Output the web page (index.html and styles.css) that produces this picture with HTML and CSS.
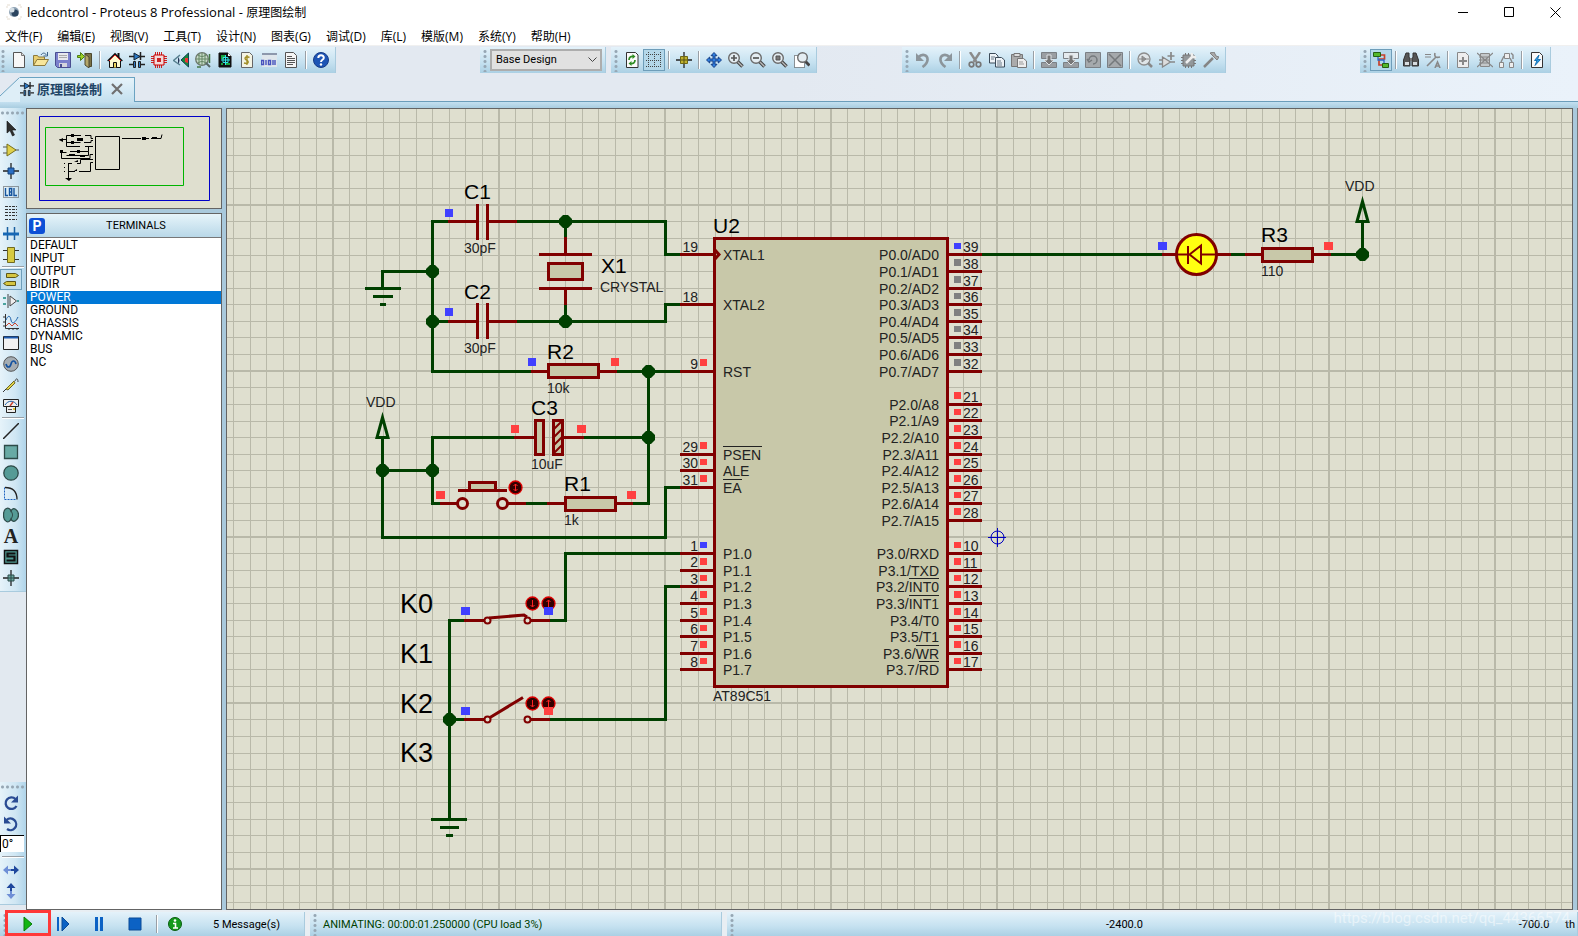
FILE: index.html
```html
<!DOCTYPE html>
<html lang="zh-CN">
<head>
<meta charset="utf-8">
<title>ledcontrol - Proteus 8 Professional - 原理图绘制</title>
<link rel="stylesheet" href="styles.css">
</head>
<body>
<header class="titlebar">
  <svg class="app-icon" viewBox="0 0 16 16"><path d="M1 1h3M12 1h3M1 15h3M12 15h3M1 2v2M15 2v2M1 12v2M15 12v2" stroke="#e4dcd0"/><circle cx="8" cy="8" r="5" fill="#8fa3b5"/><circle cx="9" cy="9" r="3.500" fill="#2c4560"/><circle cx="6" cy="6" r="2.500" fill="#d5dfe6"/></svg>
  <h1 class="title">ledcontrol - Proteus 8 Professional - <span class="doc">原理图绘制</span></h1>
  <div class="win-buttons">
    <button class="win" aria-label="最小化"><svg viewBox="0 0 11 11"><path d="M0 5.500h10"/></svg></button>
    <button class="win" aria-label="最大化"><svg viewBox="0 0 11 11"><path d="M.5.5h9v9h-9z"/></svg></button>
    <button class="win" aria-label="关闭"><svg viewBox="0 0 11 11"><path d="M.5.5l10 10M10.500.5l-10 10"/></svg></button>
  </div>
</header>
<nav class="menubar">
  <button>文件(F)</button><button>编辑(E)</button><button>视图(V)</button><button>工具(T)</button><button>设计(N)</button><button>图表(G)</button><button>调试(D)</button><button>库(L)</button><button>模版(M)</button><button>系统(Y)</button><button>帮助(H)</button>
</nav>
<div class="rebar">
  <div class="toolbar tb-file">
    <span class="grip"></span>
    <button class="tool" aria-label="新建"><svg viewBox="0 0 16 16"><path d="M2.500.5h8l3 3v12h-11z" fill="#f7f7f7" stroke="#555"/><path d="M10.500.5v3h3" fill="#ddd" stroke="#777"/></svg></button>
    <button class="tool" aria-label="打开"><svg viewBox="0 0 16 16"><path d="M.5 13.500v-10h4l1 1.500h6v3" fill="#e9cf70" stroke="#8c7a3c"/><path d="M.5 13.500L4 7.500h11.500l-3.500 6z" fill="#f8e69a" stroke="#8c7a3c"/><path d="M8 3c2-3 4-2 5.500 0M14.500 0v4h-4" fill="none" stroke="#3d6288"/></svg></button>
    <button class="tool" aria-label="保存"><svg viewBox="0 0 16 16"><path d="M.5.5h15v15h-13l-2-2z" fill="#7b80cc" stroke="#4a4e90"/><path d="M3 1h10v7H3z" fill="#e8e8ee"/><path d="M4 11h8v4H4z" fill="#d5d5dd"/><path d="M5 12h2v3H5z" fill="#4a4e90"/><path d="M4 3.500h8M4 5.500h8" stroke="#aaa"/></svg></button>
    <button class="tool" aria-label="退出"><svg viewBox="0 0 16 16"><path d="M7.500 1.500h7v13h-3" fill="#7b7348" stroke="#4d4930"/><path d="M8 2l4 3v11l-4-3z" fill="#b3a669" stroke="#4d4930"/><path d="M.5 3.500h3v-3l4 4-4 4v-3h-3z" fill="#9bd326" stroke="#4c7d14"/></svg></button>
    <span class="sep"></span>
    <button class="tool" aria-label="主页"><svg viewBox="0 0 16 16"><path d="M2.500 8.500v7h11v-7L8 3z" fill="#fffbd0" stroke="#111"/><path d="M11.500 1v4" stroke="#111" stroke-width="2"/><path d="M.7 9L8 1.700 15.300 9" fill="none" stroke="#111" stroke-width="1.500"/><path d="M2 9L8 3l6 6" fill="none" stroke="#d22"/><path d="M6.500 15.500v-5h3v5" fill="#f0d860" stroke="#111"/></svg></button>
    <button class="tool" aria-label="原理图"><svg viewBox="0 0 16 16"><path d="M0 4.500h16M0 12.500h4M12 12.500h4" stroke="#222" stroke-width="1.500"/><path d="M5 1l6 3.500L5 8z" fill="#2b78c4" stroke="#123"/><path d="M11.500 0v8" stroke="#222" stroke-width="1.500"/><path d="M4.500 9.500h2v6h-2zM9.500 9.500h2v6h-2z" fill="#2b78c4" stroke="#222"/></svg></button>
    <button class="tool" aria-label="PCB"><svg viewBox="0 0 16 16"><path d="M4.500 0v16M6.500 0v16M8.500 0v16M10.500 0v16M0 4.500h16M0 6.500h16M0 8.500h16M0 10.500h16" stroke="#c22"/><path d="M3 3h10v10H3z" fill="#f3dada" stroke="#c00"/><path d="M6 6h4v4H6z" fill="#c22"/></svg></button>
    <button class="tool" aria-label="3D"><svg viewBox="0 0 16 16"><path d="M15.500 1v14L8 8z" fill="#188a3c" stroke="#145"/><path d="M12 6h3v5l-3-1z" fill="#e33"/><path d="M7 3L.5 8.500 7 13" fill="none" stroke="#57808f" stroke-width="1.500"/><path d="M5 5c2 2 2 5 0 7z" fill="#235"/></svg></button>
    <button class="tool" aria-label="Gerber"><svg viewBox="0 0 16 16"><circle cx="7" cy="7" r="6.300" fill="#c9dcc9" stroke="#6b776b" stroke-width="1.300"/><path d="M1 7h12M7 1v12M3 3c3 2 5 2 8 0M3 11c3-2 5-2 8 0M4 2v10M10 2v10" fill="none" stroke="#658765"/><path d="M11 11l4 4" stroke="#566" stroke-width="2"/><path d="M14.500 2v9M2 15h4" stroke="#474" stroke-width="1.500"/></svg></button>
    <button class="tool" aria-label="设计浏览器"><svg viewBox="0 0 16 16"><path d="M2 1h9l3 3v11H2z" fill="#111" stroke="#111"/><path d="M4 4h4M4 6h3M9 12h4M4 12h2" stroke="#1fd34c" stroke-width="1.500"/><path d="M6 5.500h5v5H6zM8.500 3v10M4 8h9" fill="none" stroke="#31e5e5"/><path d="M11 1v3h3" fill="#fff"/></svg></button>
    <button class="tool" aria-label="材料清单"><svg viewBox="0 0 16 16"><path d="M2.500.5h8l3 3v12h-11z" fill="#f4f4e4" stroke="#666"/><path d="M10.500 5.500c-4-2-6 1-3 2.500s2 4.500-2.500 3M8 3v10" fill="none" stroke="#a28f28" stroke-width="1.400"/></svg></button>
    <button class="tool" aria-label="源代码"><svg viewBox="0 0 16 16"><path d="M1 1h15v14H1z" fill="#dfe6ec"/><path d="M1 2h15" stroke="#8d98ac" stroke-width="2"/><path d="M.5 8.500h2v4h-2zM5 8v5M7.500 8.500h2v4h-2zM12 8v5M14 8v5" fill="none" stroke="#4652bd" stroke-width="1.400"/></svg></button>
    <button class="tool" aria-label="项目说明"><svg viewBox="0 0 16 16"><path d="M2.500.5h8l3 3v12h-11z" fill="#f5f5f5" stroke="#555"/><path d="M4 4.500h5M4 6.500h8M4 8.500h8M4 10.500h8M4 12.500h6" stroke="#555"/></svg></button>
    <span class="sep"></span>
    <button class="tool" aria-label="帮助"><svg viewBox="0 0 16 16"><circle cx="8" cy="8" r="7.500" fill="#1d55b5" stroke="#173b85"/><path d="M5.300 6c0-3.500 5.500-3.500 5.500-.3C10.800 8 8 7.600 8 10" fill="none" stroke="#fff" stroke-width="2"/><circle cx="8" cy="12.500" r="1.200" fill="#fff"/></svg></button>
  </div>
  <div class="toolbar tb-design">
    <span class="grip"></span>
    <select class="design" aria-label="设计变体"><option>Base Design</option></select>
  </div>
  <div class="toolbar tb-view">
    <span class="grip"></span>
    <button class="tool" aria-label="刷新"><svg viewBox="0 0 16 16"><path d="M2.500.5h9l2.500 2.500v12.500H2.500z" fill="#fafafa" stroke="#333"/><path d="M5 8c0-3 2-4 4.500-3.500M11 8c0 3-2 4-4.500 3.500" fill="none" stroke="#2f8c22" stroke-width="1.700"/><path d="M8.500 2l3 2.500-3 2.500zM7.500 9l-3 2.500 3 2.500z" fill="#2f8c22"/></svg></button>
    <button class="tool on" aria-label="网格"><svg viewBox="0 0 16 16"><path d="M0 2.500h16M0 8.500h16M0 14.500h16M2.500 0v16M8.500 0v16M14.500 0v16" stroke="#444" stroke-dasharray="1 1"/></svg></button>
    <span class="sep"></span>
    <button class="tool" aria-label="原点"><svg viewBox="0 0 16 16"><path d="M0 8h16M8 0v16" stroke="#222" stroke-width="1.300"/><path d="M4.500 4.500h7v7h-7z" fill="#c0b22d" stroke="#6d6616"/><path d="M5 8h6M8 5v6" stroke="#554f10"/></svg></button>
    <span class="sep"></span>
    <button class="tool" aria-label="平移"><svg viewBox="0 0 16 16"><path d="M8 .5l3 3.200H9v3.300h3.300V5l3.200 3-3.200 3V9H9v3.300h2L8 15.500l-3-3.200h2V9H3.700v2L.5 8l3.200-3v2H7V3.700H5z" fill="#2f7fe0" stroke="#163f86"/></svg></button>
    <button class="tool" aria-label="放大"><svg viewBox="0 0 16 16"><path d="M9.500 9.500l5 5" stroke="#444" stroke-width="3.500"/><path d="M10 10l4.500 4.500" stroke="#bbb" stroke-width="1.300"/><circle cx="6" cy="6" r="5.300" fill="#e4edf2" stroke="#6b6b6b" stroke-width="1.400"/><path d="M3 6h6M6 3v6" stroke="#555" stroke-width="1.700"/></svg></button>
    <button class="tool" aria-label="缩小"><svg viewBox="0 0 16 16"><path d="M9.500 9.500l5 5" stroke="#444" stroke-width="3.500"/><path d="M10 10l4.500 4.500" stroke="#bbb" stroke-width="1.300"/><circle cx="6" cy="6" r="5.300" fill="#e4edf2" stroke="#6b6b6b" stroke-width="1.400"/><path d="M3 6h6" stroke="#555" stroke-width="1.700"/></svg></button>
    <button class="tool" aria-label="显示全部"><svg viewBox="0 0 16 16"><path d="M9.500 9.500l5 5" stroke="#444" stroke-width="3.500"/><path d="M10 10l4.500 4.500" stroke="#bbb" stroke-width="1.300"/><circle cx="6" cy="6" r="5.300" fill="#e4edf2" stroke="#6b6b6b" stroke-width="1.400"/><path d="M4 4h4v4H4z" fill="#777" stroke="#555"/></svg></button>
    <button class="tool" aria-label="区域缩放"><svg viewBox="0 0 16 16"><path d="M.5 3.500h10v12H.5z" fill="#fff" stroke="#333" stroke-dasharray="1 1"/><path d="M11.500 9.500l4 4" stroke="#444" stroke-width="3"/><circle cx="8.500" cy="5.500" r="4.800" fill="#e4edf2" stroke="#6b6b6b" stroke-width="1.400"/></svg></button>
  </div>
  <div class="toolbar tb-edit">
    <span class="grip"></span>
    <button class="tool" aria-label="撤销"><svg viewBox="0 0 16 16"><path d="M3 5.500c5-5 10-2 9.500 2.500-.3 3-2 5-5 7" fill="none" stroke="#8c959b" stroke-width="2.600"/><path d="M1 1v8h8z" fill="#8c959b"/></svg></button>
    <button class="tool" aria-label="重做"><svg viewBox="0 0 16 16"><path d="M13 5.500c-5-5-10-2-9.500 2.500.3 3 2 5 5 7" fill="none" stroke="#8c959b" stroke-width="2.600"/><path d="M15 1v8H7z" fill="#8c959b"/></svg></button>
    <span class="sep"></span>
    <button class="tool" aria-label="剪切"><svg viewBox="0 0 16 16"><path d="M3 0l6.500 10M13 0L6.500 10" stroke="#8b8b8b" stroke-width="2.400"/><circle cx="4.500" cy="12.500" r="2.300" fill="none" stroke="#777" stroke-width="1.700"/><circle cx="11.500" cy="12.500" r="2.300" fill="none" stroke="#777" stroke-width="1.700"/></svg></button>
    <button class="tool" aria-label="复制"><svg viewBox="0 0 16 16"><path d="M.5 1.500h6l2.500 2.500v7H.5z" fill="#eef3f7" stroke="#3b4a58"/><path d="M6.500 5.500h6l3 2.500v7h-9z" fill="#eef3f7" stroke="#3b4a58"/><path d="M2 5h4M2 7h3M8 9h4M8 11h5M8 13h5" stroke="#6a7a88"/></svg></button>
    <button class="tool" aria-label="粘贴"><svg viewBox="0 0 16 16"><path d="M.5 2.500h11v12H.5z" fill="#ababab" stroke="#777"/><path d="M3 1.500h6v3H3z" fill="#ddd" stroke="#777"/><path d="M6.500 6.500h6l3 2.500v6.500h-9z" fill="#eee" stroke="#777"/><path d="M8 10h4M8 12h5" stroke="#999"/></svg></button>
    <span class="sep"></span>
    <button class="tool" aria-label="块复制"><svg viewBox="0 0 16 16"><path d="M.5.500h15v6H.5zM.5 10.500h15v5H.5z" fill="#9a9ea2" stroke="#7b8085"/><path d="M6 3h4v5h3l-5 5-5-5h3z" stroke="#dfe3e6" fill="#777"/></svg></button>
    <button class="tool" aria-label="块移动"><svg viewBox="0 0 16 16"><path d="M.5.500h15v6H.5z" fill="#e5ebef" stroke="#7b8085"/><path d="M.5 10.500h15v5H.5z" fill="#9a9ea2" stroke="#7b8085"/><path d="M6 3h4v5h3l-5 5-5-5h3z" stroke="#dfe3e6" fill="#777"/></svg></button>
    <button class="tool" aria-label="块旋转"><svg viewBox="0 0 16 16"><path d="M.5.5h15v15H.5z" fill="#a5a9ac" stroke="#7b8085"/><path d="M4 8a4 4 0 1 1 4 4M2 7l2 3 3-2" fill="none" stroke="#75797c" stroke-width="1.500"/></svg></button>
    <button class="tool" aria-label="块删除"><svg viewBox="0 0 16 16"><path d="M.5.5h15v15H.5z" fill="#a5a9ac" stroke="#7b8085"/><path d="M2 2l12 12M14 2L2 14" stroke="#75797c" stroke-width="1.500"/></svg></button>
    <span class="sep"></span>
    <button class="tool" aria-label="选取器件"><svg viewBox="0 0 16 16"><circle cx="7" cy="7" r="6" fill="#dfe5e8" stroke="#8c8c8c" stroke-width="1.300"/><path d="M2 7h10M5 4v6l4-3z" fill="#999" stroke="#888"/><path d="M11 11l4 4" stroke="#888" stroke-width="2.500"/></svg></button>
    <button class="tool" aria-label="制作器件"><svg viewBox="0 0 16 16"><path d="M3.500 5l8 5-8 5zM0 8h3M0 12h3M11 10h5" fill="#ddd" stroke="#888" stroke-width="1.300"/><path d="M12 0v8M8.500 4h7" stroke="#888" stroke-width="1.700"/></svg></button>
    <button class="tool" aria-label="封装工具"><svg viewBox="0 0 16 16"><path d="M4.500 1v15M7.500 1v15M10.500 1v15M0 5.500h15M0 8.500h15M0 11.500h15" stroke="#777"/><path d="M2 3h11v11H2z" fill="#92979a" stroke="#747474"/><path d="M5 11l7-7M11 1c-1 3 1 5 4 4" fill="none" stroke="#eee" stroke-width="2.500"/></svg></button>
    <button class="tool" aria-label="分解"><svg viewBox="0 0 16 16"><path d="M1 15l9-9" stroke="#858585" stroke-width="2.500"/><path d="M7 1l7 7 2-3-3-1-2-4z" fill="#aaa" stroke="#808080"/></svg></button>
  </div>
  <div class="toolbar tb-tools">
    <span class="grip"></span>
    <button class="tool on" aria-label="自动连线"><svg viewBox="0 0 16 16"><path d="M8 3h3.500v4H6v6h3" fill="none" stroke="#c6422b" stroke-width="1.700"/><path d="M5 5v3h6v3" fill="none" stroke="#2b66c6" stroke-width="1.300"/><path d="M.5.5h7v4h-7zM9.500 11.500h6v4h-6z" fill="#54b82c" stroke="#245f12"/></svg></button>
    <span class="sep"></span>
    <button class="tool" aria-label="搜索"><svg viewBox="0 0 16 16"><path d="M3 1h3v4l1 2v7H.5V8zM13 1h-3v4L9 7v7h6.500V8z" fill="#555" stroke="#333"/><path d="M7 6h2v3H7z" fill="#777"/><path d="M2 10h4v3H2zM10 10h4v3h-4z" fill="#d8dde0"/></svg></button>
    <button class="tool" aria-label="属性分配"><svg viewBox="0 0 16 16"><path d="M0 2.500h6M0 5h6" stroke="#888"/><path d="M2 14l9-9M10 1c-1 4 1 5 5 4M10 16l2.500-6 2.500 6M11 14h3" fill="none" stroke="#888" stroke-width="1.600"/></svg></button>
    <span class="sep"></span>
    <button class="tool" aria-label="新建图纸"><svg viewBox="0 0 16 16"><path d="M2.500.5h8l3 3v12h-11z" fill="#eee" stroke="#888"/><path d="M8 5v8M4 9h8" stroke="#888" stroke-width="2"/></svg></button>
    <button class="tool" aria-label="删除图纸"><svg viewBox="0 0 16 16"><path d="M3.500 1.500h9v13h-9z" fill="#c4c8ca" stroke="#888"/><path d="M0 1l16 14M16 1L0 15M2 5h11M2 8h11M2 11h11" stroke="#868686" stroke-width="1.200"/></svg></button>
    <button class="tool" aria-label="层次导航"><svg viewBox="0 0 16 16"><path d="M5.500 1.500h5v5h-5zM.5 10.500h4v5h-4zM10.500 10.500h4v5h-4z" fill="#eee" stroke="#888"/><path d="M5 4L2 10M11 6l2 4M12 1l2 2v4" fill="none" stroke="#888" stroke-width="1.400"/></svg></button>
    <span class="sep"></span>
    <button class="tool" aria-label="电气检查"><svg viewBox="0 0 16 16"><path d="M2.500.5h8l3 3v12h-11z" fill="#fafafa" stroke="#333"/><path d="M10 3L5.500 8.500h2.500L6 13.500l5.500-6H8.500z" fill="#2a9be4" stroke="#1672b4"/></svg></button>
  </div>
</div>
<div class="tabstrip">
  <svg class="tab-slope" viewBox="0 0 20 25"><path d="M0 19L19.500.5H20V25H0z" fill="#deeef7"/><path d="M0 19L19.500.5" fill="none" stroke="#6ba3c2"/></svg>
  <div class="tab">
    <svg class="tab-icon" viewBox="0 0 16 16"><path d="M0 4.500h16M0 12.500h4M12 12.500h4" stroke="#222" stroke-width="1.500"/><path d="M5 1l6 3.500L5 8z" fill="#2b78c4" stroke="#123"/><path d="M11.500 0v8" stroke="#222" stroke-width="1.500"/><path d="M4.500 9.500h2v6h-2zM9.500 9.500h2v6h-2z" fill="#2b78c4" stroke="#222"/></svg>
    <span class="tab-name">原理图绘制</span>
    <button class="tab-close" aria-label="关闭标签"><svg viewBox="0 0 12 12"><path d="M1 1l10 10M11 1L1 11" stroke="#707070" stroke-width="2.200"/></svg></button>
  </div>
  <div class="tab-rest"></div>
</div>
<div class="band"></div>
<main class="work">
  <div class="modes">
    <div class="mode-bar">
      <span class="hgrip"></span>
      <button class="mode" aria-label="选择"><svg viewBox="0 0 16 16"><path d="M4 0v12l3-2.500L9.500 15l2-1-2.500-5h4z" fill="#2e2e2e" stroke="#111" stroke-width=".6"/></svg></button>
      <button class="mode" aria-label="器件"><svg viewBox="0 0 16 16"><path d="M0 5h4M0 11h4M12 8h4" stroke="#555"/><path d="M4 2l9 6-9 6z" fill="#dfd04b" stroke="#77701f"/></svg></button>
      <button class="mode" aria-label="结点"><svg viewBox="0 0 16 16"><path d="M0 8h16M8 0v16" stroke="#222" stroke-width="1.300"/><path d="M5 5h6v6H5z" fill="#2b6fc4" stroke="#174379"/></svg></button>
      <button class="mode" aria-label="连线标号"><svg viewBox="0 0 16 16"><path d="M.5 2.500h15v11H.5z" fill="none" stroke="#444" stroke-dasharray="1 1"/><path d="M2.500 4v7.500h2.500M6.500 4.500h2.200v6.800H6.500zM6.500 8H9M11 4v7.500h3" fill="none" stroke="#16559e" stroke-width="1.400"/></svg></button>
      <button class="mode" aria-label="文本脚本"><svg viewBox="0 0 16 16"><path d="M2 1.500h12M2 4.500h12M2 7.500h12M2 10.500h12M2 14.500h12" stroke="#333" stroke-dasharray="3 1 2 1"/></svg></button>
      <button class="mode" aria-label="总线"><svg viewBox="0 0 16 16"><path d="M4.500 1v13M11.500 1v13" stroke="#1a5fa0" stroke-width="1.500"/><path d="M0 8h16" stroke="#1768b5" stroke-width="3"/></svg></button>
      <button class="mode" aria-label="子电路"><svg viewBox="0 0 16 16"><path d="M0 3.500h4M0 12.500h4M12 3.500h4M12 12.500h4" stroke="#333"/><path d="M4.500.5h7v15h-7z" fill="#d8ca42" stroke="#716a20"/></svg></button>
      <span class="hsep"></span>
      <button class="mode on" aria-label="终端"><svg viewBox="0 0 16 16"><path d="M3.500 1.500h9l3 2-3 2h-9zM12.500 9.500h-9l-3 2 3 2h9z" fill="#d5c540" stroke="#5d5717"/></svg></button>
      <button class="mode" aria-label="器件引脚"><svg viewBox="0 0 16 16"><path d="M0 5h3M0 11h3M14 8h2" stroke="#188a80" stroke-width="1.500"/><path d="M5 1v14M7 3l6.500 5L7 13z" fill="#eee" stroke="#444"/></svg></button>
      <button class="mode" aria-label="图表"><svg viewBox="0 0 16 16"><path d="M2.500 0v14.500H16M0 3h2M0 8h2M0 12h2M6 14v2M10 14v2M14 14v2" fill="none" stroke="#333"/><path d="M3 6c2-5 4-5 5 0s4 3 7-3" fill="none" stroke="#195ea8"/><path d="M3 12l3-3 3 3 3-3 3 3" fill="none" stroke="#cd432c"/></svg></button>
      <button class="mode" aria-label="窗口"><svg viewBox="0 0 16 16"><path d="M.5 1.500h15v13H.5z" fill="#f2f2f2" stroke="#222"/><path d="M1 2.500h14" stroke="#1d5bb0" stroke-width="2"/></svg></button>
      <button class="mode" aria-label="激励源"><svg viewBox="0 0 16 16"><circle cx="8" cy="8" r="7.300" fill="#a5adb3" stroke="#555"/><path d="M3 8c1 4 4 4 5 0s4-4 5 0" fill="none" stroke="#1452a0" stroke-width="1.700"/></svg></button>
      <button class="mode" aria-label="探针"><svg viewBox="0 0 16 16"><path d="M0 15l4-4" stroke="#333"/><path d="M3 12l8-8 1 2-7 7z" fill="#e0d34a" stroke="#6d6520"/><path d="M12 4c1-3 3-3 3 1" fill="none" stroke="#444"/></svg></button>
      <button class="mode" aria-label="仪表"><svg viewBox="0 0 16 16"><path d="M.5 1.500h15v7H.5zM3.500 8.500h9v6h-9z" fill="#eee" stroke="#222"/><path d="M2 7c3-5 9-5 12 0" fill="none" stroke="#195ea8"/><path d="M7 8l3-4" stroke="#cd432c" stroke-width="1.400"/><path d="M5 11.500h4" stroke="#555"/><path d="M10 10h2v2h-2z" fill="#ddc72a"/></svg></button>
      <span class="hsep"></span>
      <button class="mode" aria-label="直线"><svg viewBox="0 0 16 16"><path d="M0 16L16 0" stroke="#222" stroke-width="1.500"/></svg></button>
      <button class="mode" aria-label="方框"><svg viewBox="0 0 16 16"><path d="M1.500 1.500h13v13h-13z" fill="#68aaa5" stroke="#2d4a48" stroke-width="1.300"/></svg></button>
      <button class="mode" aria-label="圆"><svg viewBox="0 0 16 16"><circle cx="8" cy="8" r="7.200" fill="#559b96" stroke="#2d4a48" stroke-width="1.300"/></svg></button>
      <button class="mode" aria-label="圆弧"><svg viewBox="0 0 16 16"><path d="M1.500 1.500v12h12" fill="none" stroke="#1b62c0" stroke-dasharray="2 1"/><path d="M2 1.500c8 0 12 4 12 12" fill="none" stroke="#222" stroke-width="1.300"/></svg></button>
      <button class="mode" aria-label="路径"><svg viewBox="0 0 16 16"><path d="M8 4C6-1 .5 1 .5 8S6 17 8 12c2 5 7.500 1 7.500-4S10-1 8 4z" fill="#559b96" stroke="#2d4a48" stroke-width="1.300"/><path d="M8 4c2 3 2 5 0 8" fill="none" stroke="#2d4a48"/></svg></button>
      <button class="mode letter" aria-label="文本">A</button>
      <button class="mode" aria-label="符号"><svg viewBox="0 0 16 16"><path d="M1.500 1.500h13v13h-13z" fill="#4f9a92" stroke="#111" stroke-width="1.500"/><path d="M12.500 4.500h-8v3h7v4h-8" fill="none" stroke="#111" stroke-width="2.200"/></svg></button>
      <button class="mode" aria-label="标记"><svg viewBox="0 0 16 16"><path d="M0 8h16M8 0v16" stroke="#222" stroke-width="1.300"/><path d="M5 5h6v6H5z" fill="#6aa8a0" stroke="#2d4a48"/><path d="M5 8h6M8 5v6" stroke="#2d4a48"/></svg></button>
    </div>
    <div class="mode-bar rotate-bar">
      <span class="hgrip"></span>
      <button class="mode" aria-label="顺时针旋转"><svg viewBox="0 0 16 16"><path d="M12.500 4A5.800 5.800 0 1 0 13.500 11" fill="none" stroke="#2a4c93" stroke-width="2.300"/><path d="M15 .5v7H8z" fill="#2a4c93"/></svg></button>
      <button class="mode" aria-label="逆时针旋转"><svg viewBox="0 0 16 16"><path d="M3.500 4A5.800 5.800 0 1 1 4 13" fill="none" stroke="#2a4c93" stroke-width="2.300"/><path d="M1 .5v7h7z" fill="#2a4c93"/></svg></button>
      <input class="angle" type="text" value="0°" aria-label="角度">
      <span class="hsep"></span>
      <button class="mode" aria-label="水平翻转"><svg viewBox="0 0 16 16"><path d="M0 8l5-4.500V7h3v2H5v3.500z" fill="#6f8fd6"/><path d="M16 8l-5-4.500V7H8v2h3v3.500z" fill="#1f479c"/></svg></button>
      <button class="mode" aria-label="垂直翻转"><svg viewBox="0 0 16 16"><path d="M8 0l4.500 5H9v3H7V5H3.500z" fill="#1f479c"/><path d="M8 16l4.500-5H9V8H7v3H3.500z" fill="#6f8fd6"/></svg></button>
    </div>
  </div>
  <aside class="side">
    <div class="overview">
      <svg viewBox="27 109 194 99" fill="none"><path d="M39.500 116.500h170v84h-170z" stroke="#0000c8"/><path d="M45.500 127.500h138v58h-138z" stroke="#00b400"/><g stroke="#000"><path d="M95.500 136.500h24v33h-24zM122 138.500h19M145 138.500h4M151 138.500h10l1-4M93 138.500h-2v-3h-6M81 135.500H66.500v7M66.500 139.500h-7M66.500 142.500h14M84 142.500h7v-2h2M66.500 142v4.500H80M85 146.500h8M61.500 150v8.500H90v-4h3M61.500 152.500h5M70 151.500h18.500v-5M66.500 155.500h22v-4M93 159.500H80.500v4H77M93 162.500h-2.500v9H79M75 171.500h-6M72 163.500h-4M68.500 164v15"/><path d="M64.500 163v12" stroke-dasharray="1 3"/></g><path d="M59 140l4-2v4zM71 134h3v3h-3zM71 141h3v3h-3zM77 138h6v3h-6zM77 150h3v3h-3zM69 154h6v2h-6zM80 155h5v2h-5zM60 150h3v3h-3zM142 137h4v3h-4zM152 137h5v2h-5zM74 162l4-2v2zM74 171l3-2v2zM65 178h7l-3 3z" fill="#000"/></svg>
    </div>
    <section class="picker">
      <div class="picker-head"><button class="pick" aria-label="选取">P</button><h2>TERMINALS</h2></div>
      <ul class="terms">
        <li>DEFAULT</li><li>INPUT</li><li>OUTPUT</li><li>BIDIR</li><li class="sel">POWER</li><li>GROUND</li><li>CHASSIS</li><li>DYNAMIC</li><li>BUS</li><li>NC</li>
      </ul>
    </section>
  </aside>
  <div class="sheet">
    <svg class="schematic" width="100%" height="100%">
      <defs>
        <pattern id="grid" x="332" y="204" width="166" height="166" patternUnits="userSpaceOnUse">
          <path class="grid" d="M17.500 0v166M34.500 0v166M51.500 0v166M67.500 0v166M84.500 0v166M100.500 0v166M117.500 0v166M133.500 0v166M150.500 0v166M0 17.500h166M0 34.500h166M0 51.500h166M0 67.500h166M0 84.500h166M0 100.500h166M0 117.500h166M0 133.500h166M0 150.500h166"/>
          <path class="grid major" d="M1 0v166M0 1h166"/>
        </pattern>
        <path id="dot" d="M-2.500-6.500h5l4 4v5l-4 4h-5l-4-4v-5z"/>
        <g id="toggle"><circle r="6.500" fill="#300" stroke="#e00000" stroke-width="1.300"/></g>
        <g id="vdd"><path class="wire" d="M0 1.500L-5.500 21.500h11zM0 22v33"/></g>
      </defs>
      <g transform="translate(-227 -109)">
        <rect x="227" y="109" width="4000" height="3000" fill="url(#grid)"/>
        <path class="body" d="M714.500 238.500h233v448h-233z"/>
        <path class="wire" d="M448 221.500h-15.500v150H531M448 321.500h-15.500M432.500 271.500h-50v17M365 288.500h36M373 296.500h20M380 304.500h6M517 221.500h148.500v33H680M517 321.500h148.500v-17H680M565.500 221v16M565.500 305v16M617 371.500h63M648.500 371v132.500H633M584 437.500h64M514 437.500h-81.500v66h8M382.500 470.500h50M382.500 470v67.500h283v-50H680M526 503.500h21M680 553.500H565.500v67H550M464 620.500h-14.500v199M449.500 719.500H464M550 719.500h115.500v-133H680M431 819.500h36M440 827.500h19M446 835.500h7M982 254.500h180M1231 254.500h14M1331 254.500h32"/>
        <path class="part" d="M448 221.500h29M488 221.500h29M477.500 204v36M487.500 204v36M448 321.500h29M488 321.500h29M477.500 303v36M487.500 303v36M565.500 237v17M539 254.500h53M539 288.500h53M565.500 289v16M531 371.500h17M600 371.500h17M514 437.500h20M564 437.500h20M440 503.500h17M508 503.500h18M547 503.500h17M617 503.500h16M458 490.500h49M464 620.500h20M531 620.500h19M464 719.500h20M531 719.500h19M489 618l35-3 3 2M490 717.500l33-20M1162 254.500h69M1245 254.500h17M1314 254.500h17"/>
        <path class="part" d="M680 254.500h34M680 304.500h34M680 371.500h34M680 454.500h34M680 470.500h34M680 487.500h34M680 553.500h34M680 570.500h34M680 586.500h34M680 603.500h34M680 620.500h34M680 636.500h34M680 653.500h34M680 669.500h34M948 254.500h34M948 271.500h34M948 288.500h34M948 304.500h34M948 321.500h34M948 337.500h34M948 354.500h34M948 371.500h34M948 404.500h34M948 420.500h34M948 437.500h34M948 454.500h34M948 470.500h34M948 487.500h34M948 503.500h34M948 520.500h34M948 553.500h34M948 570.500h34M948 586.500h34M948 603.500h34M948 620.500h34M948 636.500h34M948 653.500h34M948 669.500h34"/>
        <path class="part" d="M715 250l4 4.500-4 4.500"/>
        <path class="body" d="M548.500 263.500h34v16h-34zM548.500 364.500h50v13h-50zM535.500 420.500h8v34h-8zM553.500 420.500h9v34h-9zM565.500 497.500h50v13h-50zM469.500 482.500h26v8h-26zM1262.500 248.500h50v13h-50z"/>
        <path class="part thin" d="M554 429l8-8M554 437l8-8M554 445l8-8M554 453l8-8"/>
        <g class="body plain"><circle cx="462.500" cy="503.500" r="5"/><circle cx="502.500" cy="503.500" r="5"/></g>
        <g class="body thin"><circle cx="487.500" cy="620.500" r="3"/><circle cx="527.500" cy="620.500" r="3"/><circle cx="487.500" cy="719.500" r="3"/><circle cx="527.500" cy="719.500" r="3"/></g>
        <circle class="led" cx="1196.500" cy="254.500" r="20"/>
        <path class="part thin" d="M1176 254.500h13M1201 254.500h16M1188 246v18M1189.500 254.500l11.500-9v18z"/>
        <g class="node"><use href="#dot" x="565.500" y="221.500"/><use href="#dot" x="565.500" y="321.500"/><use href="#dot" x="432.500" y="271.500"/><use href="#dot" x="432.500" y="321.500"/><use href="#dot" x="648.500" y="371.500"/><use href="#dot" x="648.500" y="437.500"/><use href="#dot" x="382.500" y="470.500"/><use href="#dot" x="432.500" y="470.500"/><use href="#dot" x="449.500" y="719.500"/><use href="#dot" x="1362.500" y="254.500"/></g>
        <use href="#vdd" x="382.500" y="416"/><use href="#vdd" x="1362.500" y="200"/>
        <use href="#toggle" x="515.500" y="487.500"/><use href="#toggle" x="532.500" y="603.500"/><use href="#toggle" x="548.500" y="603.500"/><use href="#toggle" x="532.500" y="703.500"/><use href="#toggle" x="548.500" y="703.500"/>
        <path class="arrows" d="M515.500 484v7M513.500 486l2-2 2 2M513.500 489l2 2 2-2M532.500 600v7M530.500 605l2 2 2-2M548.500 607v-7M546.500 602l2-2 2 2M532.500 700v7M530.500 705l2 2 2-2M548.500 707v-7M546.500 702l2-2 2 2"/>
        <path class="low" d="M445 209h8v8h-8zM445 308h8v8h-8zM528 358h8v8h-8zM461 607h9v8h-9zM544 607h9v8h-9zM461 707h9v8h-9zM1158 242h9v8h-9zM700 542h7v6h-7zM954 243h7v6h-7z"/>
        <path class="high" d="M611 358h8v8h-8zM511 425h8v8h-8zM577 425h9v8h-9zM436 491h9v8h-9zM627 491h9v8h-9zM544 707h9v8h-9zM1324 242h9v8h-9zM700 359h7v7h-7zM700 442h7v7h-7zM700 459h7v6h-7zM700 475h7v7h-7zM700 558h7v7h-7zM700 575h7v6h-7zM700 591h7v7h-7zM700 608h7v7h-7zM700 625h7v6h-7zM700 641h7v7h-7zM700 658h7v6h-7zM954 392h7v7h-7zM954 409h7v6h-7zM954 425h7v7h-7zM954 442h7v7h-7zM954 459h7v6h-7zM954 475h7v7h-7zM954 492h7v6h-7zM954 508h7v7h-7zM954 542h7v6h-7zM954 558h7v7h-7zM954 575h7v6h-7zM954 591h7v7h-7zM954 608h7v7h-7zM954 625h7v6h-7zM954 641h7v7h-7zM954 658h7v6h-7z"/>
        <path class="float" d="M954 259h7v7h-7zM954 276h7v7h-7zM954 293h7v6h-7zM954 309h7v7h-7zM954 326h7v6h-7zM954 342h7v7h-7zM954 359h7v7h-7z"/>
        <g class="cursor"><circle cx="997.500" cy="537.500" r="6.500"/><path d="M988 537.500h18M997.500 528v19"/></g>
        <path class="bar" d="M723 446.500h39M723 479.500h19M909 578.500h30M909 595.500h30M916 645.500h23M919 661.500h20"/>
        <g class="ref"><text x="464" y="199">C1</text><text x="464" y="299">C2</text><text x="601" y="273">X1</text><text x="547" y="359">R2</text><text x="531" y="415">C3</text><text x="564" y="491">R1</text><text x="1261" y="242">R3</text><text x="713" y="233">U2</text></g>
        <g class="key"><text x="400" y="613">K0</text><text x="400" y="663">K1</text><text x="400" y="713">K2</text><text x="400" y="762">K3</text></g>
        <g class="val"><text x="464" y="253">30pF</text><text x="464" y="353">30pF</text><text x="600" y="292">CRYSTAL</text><text x="547" y="393">10k</text><text x="531" y="469">10uF</text><text x="564" y="525">1k</text><text x="366" y="407">VDD</text><text x="1345" y="191">VDD</text><text x="1261" y="276">110</text><text x="713" y="701">AT89C51</text></g>
        <g class="val"><text x="723" y="260">XTAL1</text><text x="723" y="310">XTAL2</text><text x="723" y="377">RST</text><text x="723" y="460">PSEN</text><text x="723" y="476">ALE</text><text x="723" y="493">EA</text><text x="723" y="559">P1.0</text><text x="723" y="576">P1.1</text><text x="723" y="592">P1.2</text><text x="723" y="609">P1.3</text><text x="723" y="626">P1.4</text><text x="723" y="642">P1.5</text><text x="723" y="659">P1.6</text><text x="723" y="675">P1.7</text></g>
        <g class="val end"><text x="698" y="252">19</text><text x="698" y="302">18</text><text x="698" y="369">9</text><text x="698" y="452">29</text><text x="698" y="468">30</text><text x="698" y="485">31</text><text x="698" y="551">1</text><text x="698" y="567">2</text><text x="698" y="584">3</text><text x="698" y="601">4</text><text x="698" y="618">5</text><text x="698" y="634">6</text><text x="698" y="651">7</text><text x="698" y="667">8</text></g>
        <g class="val end"><text x="939" y="260">P0.0/AD0</text><text x="939" y="277">P0.1/AD1</text><text x="939" y="294">P0.2/AD2</text><text x="939" y="310">P0.3/AD3</text><text x="939" y="327">P0.4/AD4</text><text x="939" y="343">P0.5/AD5</text><text x="939" y="360">P0.6/AD6</text><text x="939" y="377">P0.7/AD7</text><text x="939" y="410">P2.0/A8</text><text x="939" y="426">P2.1/A9</text><text x="939" y="443">P2.2/A10</text><text x="939" y="460">P2.3/A11</text><text x="939" y="476">P2.4/A12</text><text x="939" y="493">P2.5/A13</text><text x="939" y="509">P2.6/A14</text><text x="939" y="526">P2.7/A15</text><text x="939" y="559">P3.0/RXD</text><text x="939" y="576">P3.1/TXD</text><text x="939" y="592">P3.2/INT0</text><text x="939" y="609">P3.3/INT1</text><text x="939" y="626">P3.4/T0</text><text x="939" y="642">P3.5/T1</text><text x="939" y="659">P3.6/WR</text><text x="939" y="675">P3.7/RD</text></g>
        <g class="val"><text x="963" y="252">39</text><text x="963" y="269">38</text><text x="963" y="286">37</text><text x="963" y="302">36</text><text x="963" y="319">35</text><text x="963" y="335">34</text><text x="963" y="352">33</text><text x="963" y="369">32</text><text x="963" y="402">21</text><text x="963" y="418">22</text><text x="963" y="435">23</text><text x="963" y="452">24</text><text x="963" y="468">25</text><text x="963" y="485">26</text><text x="963" y="501">27</text><text x="963" y="518">28</text><text x="963" y="551">10</text><text x="963" y="568">11</text><text x="963" y="584">12</text><text x="963" y="601">13</text><text x="963" y="618">14</text><text x="963" y="634">15</text><text x="963" y="651">16</text><text x="963" y="667">17</text></g>
      </g>
    </svg>
  </div>
</main>
<footer class="status">
  <div class="sbar sim">
    <span class="grip"></span>
    <button class="simbtn play" aria-label="运行"><svg viewBox="0 0 16 16"><path d="M5 1l8 7-8 7z" fill="#12b512" stroke="#0a7d0a"/></svg></button>
    <button class="simbtn" aria-label="单步"><svg viewBox="0 0 16 16"><path d="M3 1v14" stroke="#0c62c4" stroke-width="2"/><path d="M7 1l7 7-7 7z" fill="#0c62c4" stroke="#0a4a96"/></svg></button>
    <button class="simbtn" aria-label="暂停"><svg viewBox="0 0 16 16"><path d="M5.500 1v14M10.500 1v14" stroke="#0c62c4" stroke-width="3"/></svg></button>
    <button class="simbtn" aria-label="停止"><svg viewBox="0 0 16 16"><path d="M2 2h12v12H2z" fill="#0c62c4" stroke="#0a4a96"/></svg></button>
    <span class="sep"></span>
    <button class="messages"><svg viewBox="0 0 16 16"><circle cx="8" cy="8" r="6.500" fill="#149a1c" stroke="#0a5d10"/><circle cx="8" cy="4.500" r="1.300" fill="#fff"/><path d="M6 7.500h2.500V12M6 12h5" fill="none" stroke="#fff" stroke-width="1.600"/></svg><span>5 Message(s)</span></button>
  </div>
  <div class="sbar anim"><span class="grip"></span><span class="anim-text">ANIMATING: 00:00:01.250000 (CPU load 3%)</span></div>
  <div class="sbar coords"><span class="grip"></span><span class="coord-x">-2400.0</span><span class="coord-y">-700.0</span><span class="unit">th</span></div>
  <span class="highlight"></span>
  <span class="watermark">https://blog.csdn.net/qq_44366574</span>
</footer>
</body>
</html>
```
FILE: styles.css
```css
* { box-sizing: border-box; }
html, body { height: 100%; }
body {
  margin: 0;
  display: flex;
  flex-direction: column;
  overflow: hidden;
  background: #e3eaf1;
  color: #000;
  font: 12px/13px Roboto, "Noto Sans CJK SC", sans-serif;
}
button { border: 0; padding: 0; margin: 0; background: none; font: inherit; color: inherit; }
svg { display: block; }

.titlebar { display: flex; align-items: center; height: 24px; padding-left: 6px; background: #fff; }
.app-icon { width: 16px; height: 16px; }
.title { flex: 1; margin: 0 0 0 5px; font: 13px/22px "Open Sans", "Noto Sans CJK SC", sans-serif; white-space: nowrap; }
.doc { font-size: 12px; }
.win-buttons { display: flex; }
.win { width: 46px; height: 22px; display: grid; place-items: center; }
.win svg { width: 11px; height: 11px; }
.win path { fill: none; stroke: #000; }

.menubar { display: flex; gap: 15px; height: 22px; padding-left: 5px; background: #fff; border-bottom: 1px solid #f0f0f0; flex: none; }
.menubar button { height: 26px; font: 12px/26px "Open Sans", "Noto Sans CJK SC", sans-serif; white-space: nowrap; }

.rebar { display: flex; flex: none; height: 31px; padding-top: 1px; background: linear-gradient(to right, #e3e9f1 50%, #eaf2fa); }
.toolbar { display: flex; align-items: center; flex: none; height: 26px; background: linear-gradient(#e4f2fa, #c5e1f0 60%, #abd0e4); border-right: 1px solid #a9cbde; }
.tb-file { margin-left: -2px; padding-right: 3px; }
.tb-design { margin-left: 144px; padding-right: 3px; }
.tb-view { margin-left: 5px; padding-right: 3px; }
.tb-edit { margin-left: 85px; padding-right: 3px; }
.tb-tools { margin-left: 134px; padding-right: 2px; }
.grip { flex: none; width: 10px; height: 24px; background: radial-gradient(circle, #96a7b4 1px, transparent 2px) 3px 1px / 4px 5px repeat-y; }
.sep { flex: none; width: 2px; height: 18px; margin: 0 3px; background: #999fa5; border-right: 1px solid #fff; }
.tool { width: 22px; height: 22px; display: grid; place-items: center; }
.tool svg { width: 16px; height: 16px; }
.tool.on { background: #b4d7e9; border: 1px solid #6e9db9; }
.design {
  width: 112px; height: 22px; padding: 0 16px 0 4px; border: 2px solid #adadad; border-radius: 0; appearance: none; color: #000;
  font: 11px/16px Roboto, sans-serif;
  background: url("data:image/svg+xml,%3Csvg xmlns='http://www.w3.org/2000/svg' width='9' height='6'%3E%3Cpath d='M.5.5l4 4 4-4' fill='none' stroke='%23444'/%3E%3C/svg%3E") right 3px center no-repeat, #e1e1e1;
}

.tabstrip { display: flex; flex: none; height: 25px; background: linear-gradient(to right, #e3e9f1 50%, #eaf2fa); }
.tab-slope { flex: none; width: 20px; height: 25px; }
.tab { display: flex; align-items: center; flex: none; padding-bottom: 2px; border-top: 1px solid #6ba3c2; border-right: 1px solid #6ba3c2; background: linear-gradient(#e6f3fa, #c4e0ef); }
.tab-icon { width: 14px; height: 16px; }
.tab-name { margin-left: 3px; font: bold 13px/22px "Noto Sans CJK SC", sans-serif; color: #1f4566; }
.tab-close { width: 12px; height: 12px; margin: 0 11px 0 9px; }
.tab-rest { flex: 1; border-bottom: 1px solid #6b9dba; }
.band { flex: none; height: 6px; background: linear-gradient(#c4e0f0, #a9cde0); }

.work { flex: 1; min-height: 0; display: flex; background: #a9c9dc; border-right: 1px solid #777; padding-right: 4px; }
.modes { flex: none; width: 26px; display: flex; flex-direction: column; justify-content: space-between; background: #e2e9f0; }
.mode-bar { display: flex; flex-direction: column; padding-bottom: 3px; background: linear-gradient(to right, #e6f3fa, #cfe6f3 60%, #b0d5ea); border-bottom: 1px solid #a9cbde; }
.rotate-bar { margin-bottom: 5px; padding-bottom: 3px; }
.hgrip { height: 10px; background: radial-gradient(circle, #96a7b4 1px, transparent 2px) 0 3px / 5px 4px repeat-x; }
.hsep { height: 2px; margin: 1px 2px; background: #999fa5; border-bottom: 1px solid #fff; }
.mode { width: 22px; height: 21px; display: grid; place-items: center; }
.mode svg { width: 16px; height: 16px; }
.mode.on { background: #c2dfee; border: 1px solid #6e9db9; }
.letter { font: bold 20px/20px "Liberation Serif", serif; color: #222; }
.angle { width: 24px; height: 17px; margin: 1px 0 3px; padding: 0 1px; border: 0; border-top: 1px solid #000; border-left: 1px solid #000; font: 12px/14px Roboto, sans-serif; background: #fff; }

.side { flex: none; width: 196px; display: flex; flex-direction: column; gap: 4px; }
.overview { border: 1px solid #646464; background: #dfdfcf; }
.overview svg { width: 194px; height: 99px; }
.picker { flex: 1; display: flex; flex-direction: column; border: 1px solid #646464; background: #fff; }
.picker-head { display: flex; align-items: center; height: 24px; padding-left: 2px; background: linear-gradient(#e6f4fa, #b9d8e8); border-bottom: 1px solid #777; }
.picker-head h2 { flex: 1; margin: 0; padding-left: 18px; padding-right: 12px; text-align: center; font: 11px/24px Roboto, sans-serif; }
.pick { width: 16px; height: 16px; border-radius: 3px; background: #0d4fd6; color: #fff; font: bold 14px/16px Roboto, sans-serif; }
.terms { flex: 1; margin: 0; padding: 1px 0 0; list-style: none; }
.terms li { height: 13px; padding-left: 3px; }
.terms .sel { background: #0078d7; color: #fff; }

.sheet { flex: 1; min-width: 0; margin-left: 4px; border: 1px solid #646464; background: #dfdfcf; overflow: hidden; position: relative; }
.schematic { position: absolute; inset: 0; font-family: "Liberation Sans", Arial, sans-serif; }
.grid { stroke: #b9b9a9; stroke-width: 1; fill: none; }
.grid.major { stroke-width: 2; }
.wire { fill: none; stroke: #004000; stroke-width: 3; }
.part { fill: none; stroke: #800000; stroke-width: 3; }
.part.thin { stroke-width: 2; }
.body { fill: #c8c8a9; stroke: #800000; stroke-width: 3; }
.body.plain { fill: #dfdfcf; }
.body.thin { stroke-width: 2; fill: #dfdfcf; }
.led { fill: #ff1; stroke: #800000; stroke-width: 3; }
.node { fill: #004000; }
.arrows { fill: none; stroke: #f22; }
.low { fill: #4040ff; }
.high { fill: #ff4040; }
.float { fill: #808080; }
.cursor { fill: none; stroke: #0000c0; }
.bar { fill: none; stroke: #222; }
.ref { font-size: 21px; }
.key { font-size: 27px; }
.val { font-size: 14px; fill: #222; }
.end { text-anchor: end; }

.status { position: relative; flex: none; display: flex; height: 26px; padding-top: 2px; gap: 5px; background: #e8eef3; font-size: 11px; }
.sbar { display: flex; align-items: center; background: linear-gradient(#e4f2fa, #c5e1f0 60%, #abd0e4); border-right: 1px solid #a9cbde; white-space: nowrap; }
.sim { width: 305px; flex: none; }
.simbtn { width: 36px; height: 22px; display: grid; place-items: center; }
.play { margin-left: -1px; }
.simbtn svg, .messages svg { width: 16px; height: 16px; }
.messages { display: flex; align-items: center; gap: 30px; margin-left: 6px; }
.anim { width: 412px; flex: none; }
.anim-text { margin-left: 3px; color: #004000; }
.coords { flex: 1; }
.coord-x { margin-left: 369px; }
.coord-y { margin-left: auto; }
.unit { margin: 0 2px 0 16px; }
.highlight { position: absolute; left: 5px; top: 0; width: 46px; height: 26px; border: 3px solid #ff3838; }
.watermark { position: absolute; right: 8px; top: 0; font: 15px/16px Roboto, sans-serif; color: rgba(255, 255, 255, .5); }
```
